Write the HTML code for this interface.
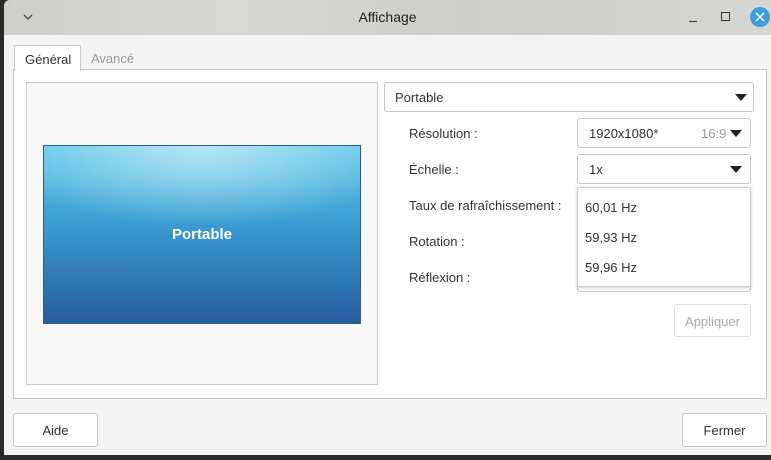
<!DOCTYPE html>
<html><head><meta charset="utf-8"><style>
*{box-sizing:border-box;margin:0;padding:0}
body{width:771px;height:460px;overflow:hidden;background:#2a2a2a;font-family:"Liberation Sans","DejaVu Sans",sans-serif;font-size:13px;color:#333;position:relative}
.win{position:absolute;left:4px;top:0;width:767px;height:455px;background:#f4f4f4;border-radius:6px 0 0 0;overflow:hidden}
.tb{position:absolute;left:0;top:0;right:0;height:35px;background:linear-gradient(90deg,#cfcfcc,#d8d8d4 30%,#cdcdca 60%,#d6d6d2)}
.title{position:absolute;left:0;right:0;top:9px;text-align:center;font-size:14px;color:#222}
.abs{position:absolute}
.box{position:absolute;background:#fff;border:1px solid #c8c8c8;border-radius:3px}
.arrow{position:absolute;width:0;height:0;border-left:6px solid transparent;border-right:6px solid transparent;border-top:7px solid #222}
.lbl{position:absolute;left:405px;font-size:13px;color:#333}
</style></head><body>
<div class="win">
<div class="tb"></div>
<svg class="abs" style="left:19px;top:13px" width="10" height="8"><path d="M1 2 L5 6 L9 2" stroke="#444" stroke-width="1.3" fill="none"/></svg>
<div class="title">Affichage</div>
<div class="abs" style="left:685px;top:21px;width:8px;height:1px;background:#333"></div>
<div class="abs" style="left:717px;top:12px;width:9px;height:9px;border:1.3px solid #333"></div>
<div class="abs" style="left:746px;top:7px;width:20px;height:20px;border-radius:50%;background:#3d9ee0"></div>
<svg class="abs" style="left:751px;top:12px" width="10" height="10"><path d="M1 1L9 9M9 1L1 9" stroke="#fff" stroke-width="1.4"/></svg>
<!-- notebook -->
<div class="abs" style="left:9px;top:69px;width:754px;height:330px;background:#fff;border:1px solid #c8c8c8"></div>
<div class="abs" style="left:10px;top:45px;width:67px;height:26px;background:#fff;border:1px solid #c8c8c8;border-bottom:none;border-radius:2px 2px 0 0;padding:6px 0 0 10px;font-size:13px;color:#333">Général</div>
<div class="abs" style="left:87px;top:51px;font-size:13px;color:#999">Avancé</div>
<div class="abs" style="left:22px;top:82px;width:352px;height:303px;background:#f8f8f8;border:1px solid #ccc"></div>
<div class="abs" style="left:39px;top:145px;width:318px;height:179px;border:1px solid #2b5f8f;background:radial-gradient(ellipse 70% 45% at 50% 0%,#b5e6f5 0%,rgba(120,205,235,0) 100%),linear-gradient(180deg,#5ec6e8 0%,#3a9bd0 45%,#2f78b5 75%,#285c9c 100%);color:#fff;font-weight:bold;font-size:15px;text-align:center;padding-top:80px">Portable</div>
<div class="box" style="left:380px;top:82px;width:370px;height:30px"></div>
<div class="abs" style="left:391px;top:90px;font-size:13px">Portable</div>
<div class="arrow" style="left:731px;top:94px"></div>
<div class="lbl" style="top:126px">Résolution :</div>
<div class="box" style="left:573px;top:118px;width:174px;height:30px"></div>
<div class="abs" style="left:585px;top:126px">1920x1080*</div>
<div class="abs" style="left:697px;top:126px;color:#999">16:9</div>
<div class="arrow" style="left:726px;top:130px"></div>
<div class="lbl" style="top:162px">Échelle :</div>
<div class="box" style="left:573px;top:154px;width:174px;height:30px"></div>
<div class="abs" style="left:585px;top:162px">1x</div>
<div class="arrow" style="left:726px;top:166px"></div>
<div class="lbl" style="top:198px">Taux de rafraîchissement :</div>
<div class="lbl" style="top:234px">Rotation :</div>
<div class="lbl" style="top:270px">Réflexion :</div>
<div class="box" style="left:573px;top:270px;width:174px;height:22px"></div>
<div class="abs" style="left:573px;top:187px;width:174px;height:100px;background:#fff;border:1px solid #d0d0d0;border-radius:2px;box-shadow:0 1px 3px rgba(0,0,0,.2)"></div>
<div class="abs" style="left:581px;top:200px">60,01 Hz</div>
<div class="abs" style="left:581px;top:230px">59,93 Hz</div>
<div class="abs" style="left:581px;top:260px">59,96 Hz</div>
<div class="abs" style="left:670px;top:304px;width:77px;height:33px;border:1px solid #e0e0e0;border-radius:3px;background:#fff;color:#aaa;text-align:center;padding-top:9px">Appliquer</div>
<div class="abs" style="left:9px;top:413px;width:85px;height:34px;border:1px solid #c8c8c8;border-radius:3px;background:#fff;text-align:center;padding-top:9px">Aide</div>
<div class="abs" style="left:678px;top:413px;width:85px;height:34px;border:1px solid #c8c8c8;border-radius:3px;background:#fff;text-align:center;padding-top:9px">Fermer</div>
</div>
</body></html>
